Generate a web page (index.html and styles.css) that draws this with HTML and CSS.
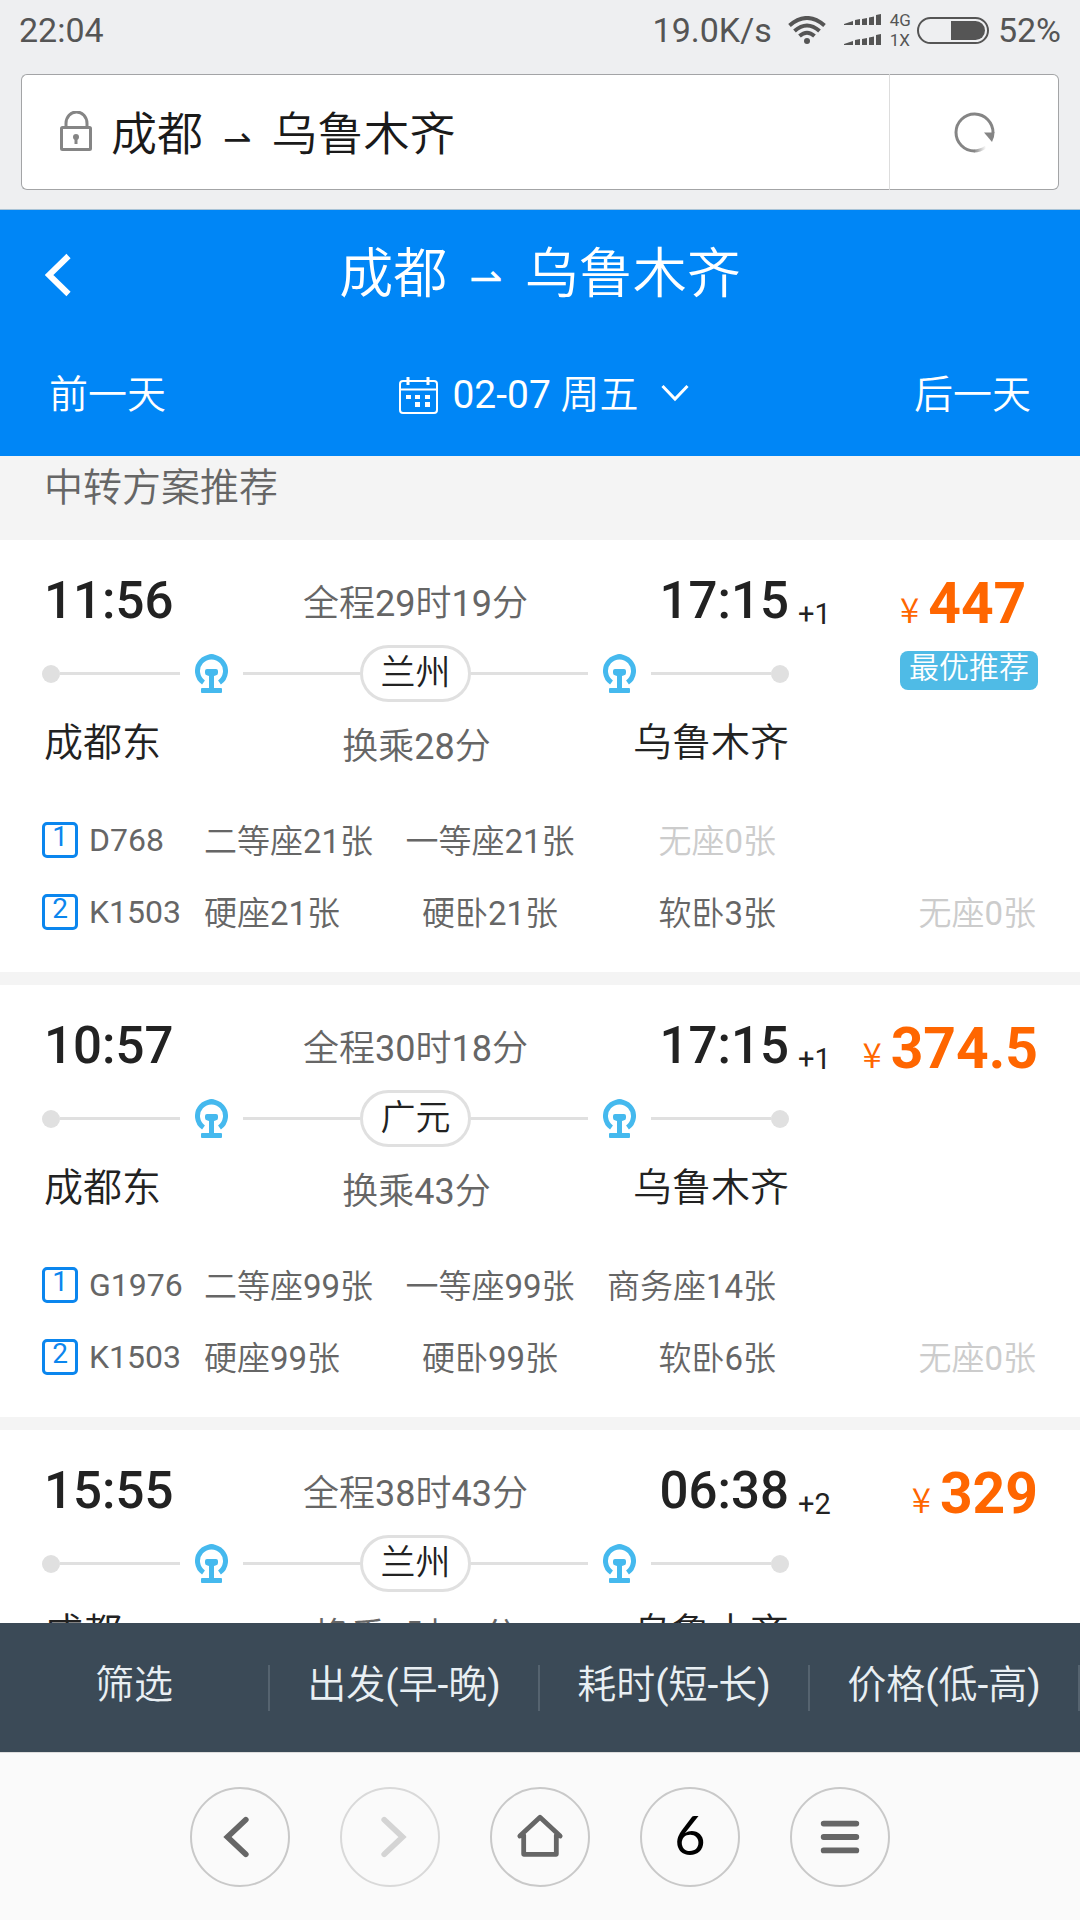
FILE: index.html
```html
<!DOCTYPE html>
<html lang="zh-CN">
<head>
  <meta charset="UTF-8" />
  <title>成都 ⇀ 乌鲁木齐</title>
  <meta name="viewport" content="width=device-width, initial-scale=1" />
  <link rel="stylesheet" href="styles.css">
</head>
<body>
  <!-- shared icons -->
  <svg class="sprite" aria-hidden="true">
    <symbol id="rail-icon" viewBox="0 0 33 39">
      <path d="M8.500 28.500A14 14 0 1 1 24.500 28.500" fill="none" stroke="#45b9ee" stroke-width="5"/>
      <path d="M12 3q1-3 4.500-3t4.500 3z" fill="#45b9ee"/>
      <path d="M12 15h9q2 0 2 2v2q0 2-2.500 2.500l-1.500.5v12h7q1 0 1 1v3q0 1-1 1h-19q-1 0-1-1v-3q0-1 1-1h7v-12l-1.500-.5q-2.500-.5-2.500-2.500v-2q0-2 2-2z" fill="#45b9ee"/>
    </symbol>
  </svg>

  <div class="status-bar">
    <span class="clock">22:04</span>
    <span class="speed">19.0K/s</span>
    <svg class="wifi" viewBox="0 0 38 28">
      <g fill="none" stroke="#555" stroke-width="4">
        <path d="M1.500 9.500Q19-5.500 36.500 9.500"/>
        <path d="M6.500 15Q19 4 31.500 15"/>
        <path d="M11.500 20Q19 13.500 26.500 20"/>
      </g>
      <circle cx="19" cy="25" r="3" fill="#555"/>
    </svg>
    <svg class="signal" viewBox="0 0 37 32" fill="#555">
      <path id="bars" d="M0 10l9-3v4H0zM11 6l5-1v6h-5zM18 5l5-1v7h-5zM25 3.500l5-1V11h-5zM32 1l5-1v11h-5z"/>
      <use href="#bars" y="20"/>
    </svg>
    <span class="network"><span>4G</span><span>1X</span></span>
    <svg class="battery" viewBox="0 0 72 27">
      <rect x="1" y="1" width="70" height="25" rx="12.500" fill="none" stroke="#555" stroke-width="2"/>
      <path d="M34 4h24.500a9.500 9.500 0 0 1 0 19H34z" fill="#555"/>
    </svg>
    <span class="percent">52%</span>
  </div>

  <div class="address-bar">
    <div class="page-title">
      <svg class="lock" viewBox="0 0 32 40">
        <rect x="1.500" y="16.500" width="29" height="22" rx="1" fill="none" stroke="#858585" stroke-width="3"/>
        <path d="M6 16v-3.500a10 11 0 0 1 21 0V16" fill="none" stroke="#858585" stroke-width="3"/>
        <circle cx="16" cy="26" r="3" fill="#858585"/>
        <path d="M14.500 26h3v7h-3z" fill="#858585"/>
      </svg>
      <span>成都</span><span class="arrow">⇀</span><span>乌鲁木齐</span>
    </div>
    <button class="reload-btn" aria-label="刷新">
      <svg viewBox="0 0 41 41">
        <defs>
          <linearGradient id="fade" x1="1" y1="0" x2="0" y2="0">
            <stop offset="0" stop-color="#858585" stop-opacity="0"/>
            <stop offset="1" stop-color="#858585"/>
          </linearGradient>
        </defs>
        <path d="M20.500 39A18.500 18.500 0 1 1 39 21" fill="none" stroke="#858585" stroke-width="3"/>
        <path d="M20 39Q26 39 32 35" fill="none" stroke="url(#fade)" stroke-width="3"/>
        <path d="M30 20.500h10.500q0 5-2.500 9.500z" fill="#858585"/>
      </svg>
    </button>
  </div>

  <header class="header">
    <div class="title-row">
      <button class="back-btn" aria-label="返回">
        <svg viewBox="0 0 26 44"><path d="M23.500 3L4 22l19.500 19" fill="none" stroke="#fff" stroke-width="6"/></svg>
      </button>
      <h1><span>成都</span><span class="arrow">⇀</span><span>乌鲁木齐</span></h1>
    </div>
    <div class="date-row">
      <button>前一天</button>
      <button class="date-btn">
        <svg class="calendar" viewBox="0 0 39 37">
          <g fill="none" stroke="#fff" stroke-width="2">
            <rect x="1" y="4" width="37" height="32" rx="3"/>
            <path d="M1 12.500h37"/>
            <path d="M9 0v8M29 0v8" stroke-width="3"/>
          </g>
          <path d="M7 18h5v4H7zM16 18h5v4h-5zM26 18h5v4h-5zM16 25h5v5h-5zM26 25h5v5h-5z" fill="#fff"/>
        </svg>
        <span>02-07 周五</span>
        <svg class="chevron" viewBox="0 0 28 18"><path d="M1.500 2L14 15 26.500 2" fill="none" stroke="#fff" stroke-width="3"/></svg>
      </button>
      <button>后一天</button>
    </div>
  </header>

  <main class="list">
    <h2 class="list-title">中转方案推荐</h2>

    <section class="card">
      <div class="trip">
        <div class="route">
          <div class="times">
            <strong>11:56</strong>
            <span class="duration">全程29时19分</span>
            <strong class="arrive">17:15<span class="plus-day">+1</span></strong>
          </div>
          <div class="rail">
            <i class="dot"></i><i class="line end"></i>
            <svg class="train"><use href="#rail-icon"/></svg>
            <i class="line"></i><span class="transfer">兰州</span><i class="line"></i>
            <svg class="train"><use href="#rail-icon"/></svg>
            <i class="line end"></i><i class="dot"></i>
          </div>
          <div class="stations">
            <span>成都东</span>
            <span class="wait">换乘28分</span>
            <span class="to">乌鲁木齐</span>
          </div>
        </div>
        <div class="price-box">
          <div class="price"><span class="yen">¥</span>447</div>
          <span class="tag">最优推荐</span>
        </div>
      </div>
      <div class="seats">
        <div class="train-no"><i>1</i>D768</div>
        <span>二等座21张</span><span>一等座21张</span><span class="none">无座0张</span><span></span>
      </div>
      <div class="seats">
        <div class="train-no"><i>2</i>K1503</div>
        <span>硬座21张</span><span>硬卧21张</span><span>软卧3张</span><span class="none">无座0张</span>
      </div>
    </section>

    <section class="card">
      <div class="trip">
        <div class="route">
          <div class="times">
            <strong>10:57</strong>
            <span class="duration">全程30时18分</span>
            <strong class="arrive">17:15<span class="plus-day">+1</span></strong>
          </div>
          <div class="rail">
            <i class="dot"></i><i class="line end"></i>
            <svg class="train"><use href="#rail-icon"/></svg>
            <i class="line"></i><span class="transfer">广元</span><i class="line"></i>
            <svg class="train"><use href="#rail-icon"/></svg>
            <i class="line end"></i><i class="dot"></i>
          </div>
          <div class="stations">
            <span>成都东</span>
            <span class="wait">换乘43分</span>
            <span class="to">乌鲁木齐</span>
          </div>
        </div>
        <div class="price-box">
          <div class="price"><span class="yen">¥</span>374.5</div>
        </div>
      </div>
      <div class="seats">
        <div class="train-no"><i>1</i>G1976</div>
        <span>二等座99张</span><span>一等座99张</span><span>商务座14张</span><span></span>
      </div>
      <div class="seats">
        <div class="train-no"><i>2</i>K1503</div>
        <span>硬座99张</span><span>硬卧99张</span><span>软卧6张</span><span class="none">无座0张</span>
      </div>
    </section>

    <section class="card">
      <div class="trip">
        <div class="route">
          <div class="times">
            <strong>15:55</strong>
            <span class="duration">全程38时43分</span>
            <strong class="arrive">06:38<span class="plus-day">+2</span></strong>
          </div>
          <div class="rail">
            <i class="dot"></i><i class="line end"></i>
            <svg class="train"><use href="#rail-icon"/></svg>
            <i class="line"></i><span class="transfer">兰州</span><i class="line"></i>
            <svg class="train"><use href="#rail-icon"/></svg>
            <i class="line end"></i><i class="dot"></i>
          </div>
          <div class="stations">
            <span>成都</span>
            <span class="wait">换乘5时54分</span>
            <span class="to">乌鲁木齐</span>
          </div>
        </div>
        <div class="price-box">
          <div class="price"><span class="yen">¥</span>329</div>
        </div>
      </div>
    </section>
  </main>

  <div class="filter-bar">
    <button>筛选</button>
    <button>出发(早-晚)</button>
    <button>耗时(短-长)</button>
    <button>价格(低-高)</button>
  </div>

  <nav class="browser-nav">
    <button aria-label="后退">
      <svg viewBox="0 0 100 100"><path d="M56 32L37 50l19 18" fill="none" stroke="#666" stroke-width="6" stroke-linecap="round"/></svg>
    </button>
    <button class="disabled" aria-label="前进" disabled>
      <svg viewBox="0 0 100 100"><path d="M44 32l19 18-19 18" fill="none" stroke="#d4d4d4" stroke-width="6" stroke-linecap="round"/></svg>
    </button>
    <button aria-label="主页">
      <svg viewBox="0 0 100 100" fill="none" stroke="#666" stroke-width="5" stroke-linecap="round" stroke-linejoin="round"><path d="M29 49L50 29.500 71 49M33 48v20h34V48"/></svg>
    </button>
    <button class="tabs-btn">6</button>
    <button aria-label="菜单">
      <svg viewBox="0 0 100 100"><path d="M33 36h34M33 50h34M33 64h34" stroke="#666" stroke-width="6" stroke-linecap="round"/></svg>
    </button>
  </nav>
</body>
</html>
```

FILE: styles.css
```css
* { box-sizing: border-box; }
body {
  margin: 0; height: 100vh; overflow: hidden;
  display: flex; flex-direction: column;
  background: #fff; color: #222;
  font-family: Roboto, "Noto Sans CJK SC DemiLight", "Noto Sans CJK SC", sans-serif; font-weight: 400;
}
button {
  font: inherit; color: inherit; background: none;
  border: none; padding: 0; cursor: pointer;
}
h1, h2 { margin: 0; font-weight: 400; }
i { font-style: normal; }
svg { display: block; flex: none; }
.sprite { position: absolute; width: 0; height: 0; }

/* phone status bar */
.status-bar {
  flex: none; height: 62px; padding: 0 19px 2px;
  display: flex; align-items: center;
  background: #eeeff1; color: #555; font-size: 34px;
}
.clock { margin-right: auto; }
.wifi { width: 38px; height: 28px; margin-left: 16px; }
.signal { width: 37px; height: 32px; margin: 0 9px 0 18px; }
.network { display: flex; flex-direction: column; font-size: 17px; line-height: 20px; }
.battery { width: 72px; height: 27px; margin: 0 9px 0 6px; }

/* address bar */
.address-bar {
  flex: none; padding: 12px 21px 19px;
  display: flex; background: #eeeff1;
  border-bottom: 1px solid #a9c3d6;
}
.page-title, .reload-btn {
  height: 116px; background: #fff; border: 1px solid #a3a4a6;
  display: flex; align-items: center;
}
.page-title {
  flex: 1; padding: 0 0 4px 38px; border-radius: 6px 0 0 6px; border-right: none;
  color: #1a1a1a; font-size: 46px; white-space: nowrap;
}
.reload-btn {
  width: 170px; justify-content: center;
  border-left-color: #ddd; border-radius: 0 6px 6px 0;
}
.reload-btn svg { width: 41px; height: 41px; }
.lock { width: 32px; height: 40px; margin: 2px 19px 0 0; }
.arrow {
  font-family: "DejaVu Sans", sans-serif; font-size: 34px;
  margin: 0 20px; padding-top: 18px;
}

/* blue header */
.header { flex: none; background: #0086f6; color: #fff; padding: 0 45px; }
.title-row { display: flex; align-items: center; height: 130px; }
.back-btn svg { width: 26px; height: 44px; }
.title-row h1 {
  flex: 1; margin-right: 26px; padding-bottom: 12px; display: flex;
  justify-content: center; align-items: center; font-size: 54px;
}
.title-row .arrow { font-size: 40px; margin: 0 22px; }
.date-row {
  height: 116px; padding: 0 4px 14px;
  display: flex; align-items: center; justify-content: space-between;
  font-size: 39px;
}
.date-btn { display: flex; align-items: center; margin-left: 8px; }
.calendar { width: 39px; height: 37px; margin: 8px 14px 0 0; }
.chevron { width: 28px; height: 18px; margin: 4px 0 0 22px; }

/* transfer plans */
.list { flex: 1; min-height: 0; overflow: hidden; background: #f4f4f4; }
.list-title {
  height: 84px; padding: 0 44px;
  color: #666; font-size: 39px; line-height: 64px;
}
.card { height: 432px; margin-bottom: 13px; padding: 30px 42px 0; background: #fff; }
.trip { display: flex; justify-content: space-between; height: 234px; }
.route { width: 75%; }
.times, .stations { display: grid; grid-template-columns: 1fr auto 1fr; align-items: center; }
.times { height: 62px; font-size: 51px; line-height: 62px; }
.times strong { font-weight: 500; padding-left: 2px; }
.duration, .wait { color: #666; font-size: 36px; }
.duration { padding-top: 6px; line-height: 56px; }
.arrive { position: relative; justify-self: end; }
.plus-day {
  position: absolute; left: 100%; top: 13px; padding-left: 9px;
  font-size: 29px; font-weight: 400;
}
.rail { display: flex; align-items: center; height: 57px; margin-top: 13px; }
.dot { width: 18px; height: 18px; border-radius: 50%; background: #e0e0e0; }
.line { flex: 1; height: 3px; background: #e0e0e0; }
.line.end { flex: 0 0 16%; }
.train { width: 33px; height: 39px; margin: 0 15px; }
.transfer {
  width: 111px; height: 57px; border: 3px solid #e0e0e0; border-radius: 29px;
  font-size: 35px; line-height: 52px; text-align: center;
}
.stations { margin-top: 7px; height: 60px; padding: 0 0 0 2px; font-size: 39px; line-height: 60px; }
.stations .wait { padding-top: 8px; }
.to { justify-self: end; }
.price-box { display: flex; flex-direction: column; align-items: flex-start; }
.price { color: #ff6600; font-size: 57px; font-weight: 700; line-height: 68px; }
.yen { margin-right: 9px; font-family: "Noto Sans CJK SC DemiLight", "Noto Sans CJK SC", sans-serif; font-size: 35px; font-weight: 350; }
.tag {
  margin-top: 9px; height: 39px; padding: 0 9px; border-radius: 8px;
  background: #4fbbe6; color: #fff; font-size: 30px; line-height: 34px;
}
.seats {
  display: grid; grid-template-columns: 162px 1fr 1fr 1fr 260px; align-items: center;
  height: 72px; padding-right: 2px; color: #666; font-size: 32px; white-space: nowrap;
}
.seats span { padding-bottom: 2px; font-size: 33px; }
.seats span:nth-child(3) { justify-self: center; }
.seats span:nth-child(4), .seats span:nth-child(5) { justify-self: end; }
.seats .none { color: #ccc; }
.train-no { display: flex; align-items: center; }
.train-no i {
  width: 36px; height: 36px; margin-right: 11px;
  border: 3px solid #0b86ee; border-radius: 5px; color: #0b86ee;
  font-size: 28px; line-height: 24px; text-align: center;
}

/* sort and filter */
.filter-bar { flex: none; display: flex; align-items: center; height: 129px; background: #3b4a57; color: #e9eff3; }
.filter-bar button {
  flex: 1; height: 46px; padding-bottom: 6px; font-size: 39px; line-height: 40px; white-space: nowrap;
  border-right: 2px solid #55636f;
}

/* browser toolbar */
.browser-nav {
  flex: none; display: flex; justify-content: center; align-items: center; gap: 50px;
  height: 168px; background: #fafafa; border-top: 1px solid #ddd;
}
.browser-nav button { width: 100px; height: 100px; border: 2px solid #c9c9c9; border-radius: 50%; }
.browser-nav svg { width: 96px; height: 96px; }
.browser-nav .disabled { border-color: #d9d9d9; }
.browser-nav .tabs-btn { padding-bottom: 4px; color: #000; font-family: Lato, sans-serif; font-size: 54px; }
```
